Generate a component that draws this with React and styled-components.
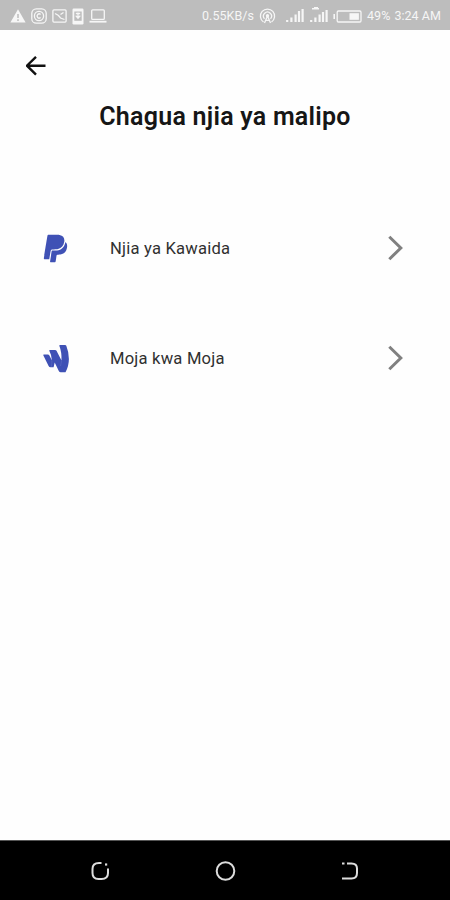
import React from 'react'
import styled, { createGlobalStyle } from 'styled-components'

const GlobalStyle = createGlobalStyle`
    body {
        margin: 0;
        background: #fefefe;
        font-family: Roboto, "Liberation Sans", sans-serif;
    }
    svg {
        display: block;
        flex: none;
    }
`;

const Screen = styled.div`
    display: flex;
    flex-direction: column;
    width: 450px;
    height: 900px;
    overflow: hidden;
    background: #fefefe;
`;

const StatusBar = styled.div`
    display: flex;
    align-items: center;
    justify-content: space-between;
    box-sizing: border-box;
    height: 30px;
    padding: 2px 9px 0 10px;
    background: #bdbdbd;
    color: #f6f6f6;
`;

const StatusGroup = styled.div`
    display: flex;
    align-items: center;
    gap: ${props => props.$gap || 0}px;
    margin-left: ${props => props.$before || 0}px;
`;

const StatusText = styled.span`
    font-size: 12.5px;
    line-height: 16px;
    white-space: nowrap;
    letter-spacing: 0.05px;
    margin-right: ${props => props.$after || 0}px;
`;

const Header = styled.header`
    height: 70px;
    box-sizing: border-box;
    padding: 26px 0 0 26px;
`;

const Title = styled.h1`
    margin: 0;
    height: 32px;
    font-size: 25px;
    line-height: 33px;
    font-weight: 600;
    letter-spacing: 0.25px;
    text-align: center;
    color: #161616;
`;

const MethodList = styled.div`
    flex: 1;
    padding-top: 61px;
`;

const MethodRow = styled.div`
    display: flex;
    align-items: center;
    height: 110px;
    padding: 0 46px 0 39px;
`;

const MethodIcon = styled.div`
    width: 33px;
    margin-right: 38px;
    padding-top: 1px;
    color: #3f51b5;
`;

const MethodName = styled.span`
    flex: 1;
    padding-top: 2px;
    font-size: 16.6px;
    line-height: 22px;
    letter-spacing: 0.2px;
    color: #303030;
`;

const NavBar = styled.nav`
    display: flex;
    justify-content: space-between;
    align-items: center;
    box-sizing: border-box;
    height: 60px;
    padding: 0 90px;
    border-top: 1px solid #555;
    background: #000;
`;

const WarningIcon = () => (
    <svg width="16" height="16" viewBox="0 0 16 16">
        <path d="M8 1.2 15.6 14.5H.4Z" fill="currentColor" />
        <path d="M8 6v4M8 11.3v1.6" stroke="#bdbdbd" strokeWidth="1.5" />
    </svg>
)

const CameraIcon = () => (
    <svg width="16" height="16" viewBox="0 0 16 16" fill="none" stroke="currentColor" strokeWidth="1.3">
        <rect x=".8" y=".8" width="14.4" height="14.4" rx="4.5" />
        <circle cx="8" cy="8" r="4.6" />
        <path d="M9.6 6.4A2.1 2.1 0 1 0 9.6 9.6" />
    </svg>
)

const PictureIcon = () => (
    <svg width="15" height="14" viewBox="0 0 15 14" fill="none" stroke="currentColor" strokeWidth="1.3">
        <rect x=".9" y=".9" width="13.2" height="12.2" rx="1" />
        <path d="m3 4.5 3.5 2L8.5 9l4 1.5M8.5 5.5l3-2" />
    </svg>
)

const PhoneIcon = () => (
    <svg width="12" height="17" viewBox="0 0 12 17">
        <rect x=".5" y=".5" width="11" height="16" rx="1.2" fill="currentColor" />
        <path d="M2.3 3.5h7.4v9.3H2.3z" fill="#bdbdbd" />
        <path d="M6 4.5v6M3.7 7.6 6 10.2l2.3-2.6M3.8 5.5h4.4" fill="none" stroke="currentColor" strokeWidth="1.3" />
    </svg>
)

const LaptopIcon = () => (
    <svg width="18" height="14" viewBox="0 0 18 14" fill="none" stroke="currentColor" strokeWidth="1.3">
        <rect x="2.7" y=".8" width="12.6" height="9.6" rx="1" />
        <path d="M.5 12.7h17" strokeWidth="1.8" />
    </svg>
)

const HotspotIcon = () => (
    <svg width="17" height="16" viewBox="0 0 17 16" fill="none" stroke="currentColor" strokeWidth="1.3">
        <path d="M4.5 14A7.1 7.1 0 1 1 12.5 14" />
        <path d="M5.5 10.7A4 4 0 1 1 11.5 10.7" />
        <path d="m5.5 15 3-7 3 7M6.5 12.4h4" />
        <circle cx="8.5" cy="7.7" r="1" fill="currentColor" />
    </svg>
)

const SignalIcon = ({ data }) => (
    <svg width="18" height="18" viewBox="0 0 18 18" fill="none" stroke="currentColor">
        <path d="M1.2 13v2M5.4 10.5V15M9.6 7.5V15" strokeWidth="2.2" />
        <path d={data ? 'M13 5v10M16.6 3v12' : 'M13 4v11M16.6 2v13'} strokeWidth="2.2" />
        {data && <path d="M2 1.7h7M4 .6h4" strokeWidth="1.5" />}
    </svg>
)

const BatteryIcon = () => (
    <svg width="29" height="13" viewBox="0 0 29 13">
        <path d="M1.2 4v5" stroke="currentColor" strokeWidth="1.6" />
        <rect x="4.2" y="1" width="23.8" height="11" rx="1.2" fill="none" stroke="currentColor" strokeWidth="1.3" />
        <path d="M16.5 3.2h9.4v6.6h-9.4z" fill="currentColor" />
    </svg>
)

const BackArrow = () => (
    <svg width="20" height="20" viewBox="0 0 20 20" fill="none" stroke="#111" strokeWidth="2.4">
        <path d="M10 .9.9 9.7l9.1 8.9M1.5 9.7h18" />
    </svg>
)

const Chevron = () => (
    <svg width="17" height="26" viewBox="0 0 17 26" fill="none" stroke="#808080" strokeWidth="3">
        <path d="M2.3 1.8 13.8 13 2.3 24.2" />
    </svg>
)

const PaypalIcon = () => (
    <svg width="33" height="33" viewBox="0 0 24 24" fill="currentColor">
        <path d="M8.32 21.97C8.21 21.92 8.08 21.76 8.06 21.65 8.03 21.5 8 21.76 8.66 17.56 9.26 13.76 9.25 13.82 9.33 13.71 9.46 13.54 9.44 13.54 10.94 13.53 12.26 13.5 12.54 13.5 13.13 13.41 16.38 12.96 18.39 11.05 19.09 7.75 19.13 7.53 19.17 7.34 19.18 7.34 19.18 7.33 19.25 7.38 19.33 7.44 20.36 8.22 20.71 9.66 20.32 11.58 19.86 13.87 18.64 15.39 16.74 16.04 15.93 16.32 15.25 16.43 14.05 16.46 13.25 16.5 13.23 16.5 13 16.65 12.83 16.82 12.84 16.79 12.45 19.2 12.18 20.9 12.08 21.45 12.04 21.55 11.97 21.71 11.83 21.85 11.67 21.93L11.56 22H10C8.71 22 8.38 22 8.32 21.97M3.82 19.74C3.63 19.64 3.5 19.47 3.5 19.27 3.5 19 6.11 2.68 6.18 2.5 6.27 2.32 6.5 2.13 6.68 2.06L6.83 2H10.36C14.27 2 14.12 2 15 2.2 17.62 2.75 18.82 4.5 18.37 7.13 17.87 10.06 16.39 11.8 13.87 12.43 13 12.64 12.39 12.7 10.73 12.7 9.42 12.7 9.32 12.7 9.06 12.85 8.8 13 8.59 13.27 8.5 13.58 8.5 13.67 8.23 15.07 7.97 16.7 7.71 18.33 7.5 19.69 7.47 19.72V19.78H5.69C4.11 19.78 3.89 19.78 3.82 19.74Z" />
    </svg>
)

const WalletIcon = () => (
    <svg width="33" height="33" viewBox="0 0 33 33" fill="currentColor">
        <path d="M5 12.5Q3.8 12.5 4.4 13.5L9.6 24Q10.2 25.2 11.5 25.2H14.6L15.7 20.5 19.8 29Q20.5 30.2 21.7 30.2H26.5Q29.9 24 29.9 17 29.9 10 27.3 3.7 27 3 26 3H21Q20 3 20.4 4 22.8 10 22.5 18.5L17.5 8.7Q17.1 8 16 8H11Q9.8 8 10.4 9 12.7 13 12.9 18.5L10.4 13.4Q9.9 12.5 8.8 12.5Z" />
        <path d="M12.9 18.5Q13 22 12.2 25M22.5 18.5Q22.3 21 21.5 24" fill="none" stroke="#6573c4" strokeWidth=".5" />
    </svg>
)

const RecentIcon = () => (
    <svg width="21" height="22" viewBox="0 0 21 22" fill="none" stroke="#ddd" strokeWidth="2">
        <path d="M11.5 3H9Q2.5 3 2.5 9v4q0 6 6 6h3q6.5 0 6.5-6V8.5" />
        <path d="M15 4.5h2.2" strokeWidth="2.2" />
    </svg>
)

const HomeIcon = () => (
    <svg width="21" height="22" viewBox="0 0 21 22" fill="none" stroke="#ddd" strokeWidth="2">
        <circle cx="10.5" cy="11" r="8.8" />
    </svg>
)

const ReturnIcon = () => (
    <svg width="21" height="22" viewBox="0 0 21 22" fill="none" stroke="#ddd" strokeWidth="2">
        <path d="M3 3.5h2.5M8 3.5h4.5q5.5 0 5.5 5V13q0 5.5-5.5 5.5H3" />
    </svg>
)

const methods = [
    { name: 'Njia ya Kawaida', icon: <PaypalIcon /> },
    { name: 'Moja kwa Moja', icon: <WalletIcon /> },
]

class App extends React.Component {
    render() {
        return (
            <Screen>
                <GlobalStyle />
                <StatusBar>
                    <StatusGroup $gap={5}>
                        <WarningIcon />
                        <CameraIcon />
                        <PictureIcon />
                        <PhoneIcon />
                        <LaptopIcon />
                    </StatusGroup>
                    <StatusGroup $gap={5}>
                        <StatusText>0.55KB/s</StatusText>
                        <HotspotIcon />
                        <StatusGroup $gap={6} $before={5}>
                            <SignalIcon />
                            <SignalIcon data />
                        </StatusGroup>
                        <BatteryIcon />
                        <StatusText $after={-1}>49%</StatusText>
                        <StatusText>3:24 AM</StatusText>
                    </StatusGroup>
                </StatusBar>
                <Header>
                    <BackArrow />
                </Header>
                <Title>Chagua njia ya malipo</Title>
                <MethodList>
                    {methods.map(method => (
                        <MethodRow key={method.name}>
                            <MethodIcon>{method.icon}</MethodIcon>
                            <MethodName>{method.name}</MethodName>
                            <Chevron />
                        </MethodRow>
                    ))}
                </MethodList>
                <NavBar>
                    <RecentIcon />
                    <HomeIcon />
                    <ReturnIcon />
                </NavBar>
            </Screen>
        )
    }
}

export default App
